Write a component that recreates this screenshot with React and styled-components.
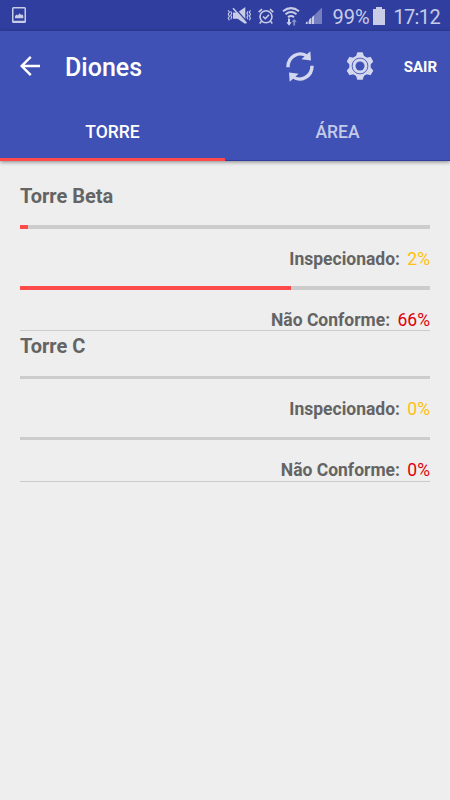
import React from 'react';
import styled, { createGlobalStyle } from 'styled-components';

const COLORS = {
  statusBar: '#303f9f',
  primary: '#3f51b5',
  accent: '#ff4a4a',
  page: '#eeeeee',
  track: '#cccccc',
  text: '#646464',
  statusIcon: '#c8cce7',
  toolbarIcon: '#d4d8ee',
};

const towers = [
  { name: 'Torre Beta', inspected: 2, nonConforming: 66 },
  { name: 'Torre C', inspected: 0, nonConforming: 0 },
];

const PictureIcon = () => (
  <svg width="16" height="17" viewBox="0 0 16 17">
    <path fill={COLORS.statusIcon} fillRule="evenodd" d="M2.5 0h11a1.500 1.500 0 0 1 1.500 1.500v13a1.500 1.500 0 0 1-1.500 1.500h-11a1.500 1.500 0 0 1-1.500-1.500v-13A1.500 1.500 0 0 1 2.500 0zM2.500 1.500v12.200h11V1.500z" />
    <path fill={COLORS.statusIcon} d="M4 11.300V9l1.700-1.500 1.200 1 1.500-2.300 1.700 1.700 1-.7 1.200 1.600v2.500z" />
  </svg>
);

const MuteIcon = () => (
  <svg width="26" height="18" viewBox="0 0 26 18">
    <path fill={COLORS.statusIcon} d="M6 5.500h4.600L18.300 0v17l-7.700-5.200H6z" />
    <path stroke={COLORS.statusBar} strokeWidth="1.300" d="M7.200.5l13 14.500" />
    <path stroke={COLORS.statusIcon} strokeWidth="1.500" d="M6 1.300l13.500 15" />
    <path fill="none" stroke={COLORS.statusIcon} strokeWidth="1.100" d="M1.200 3.200l1.200 2-1.200 2 1.200 2-1.200 2 1.200 2M3.700 4.200l1 2-1 2 1 2-1 2M21 4.200l-1 2 1 2-1 2 1 2M23.500 3.200l-1.200 2 1.200 2-1.200 2 1.200 2-1.200 2" />
  </svg>
);

const AlarmIcon = () => (
  <svg width="16" height="17" viewBox="0 0 16 17">
    <g fill="none" stroke={COLORS.statusIcon} strokeWidth="1.600">
      <circle cx="8" cy="8.700" r="6" />
      <path d="M5 8.500l2.300 2.200 3.700-4M.7 4.200L4 1.200M15.300 4.200L12 1.200M3.500 13.300l-1.800 2.200M12.500 13.300l1.800 2.200" />
    </g>
  </svg>
);

const WifiIcon = () => (
  <svg width="18" height="19" viewBox="0 0 18 19">
    <g fill="none" stroke={COLORS.statusIcon} strokeWidth="2">
      <path d="M1 4.200q8-6.200 16 0M3.500 7.200q5.500-4.400 11 0M6 10.100q3-2.300 6 0" />
    </g>
    <path fill={COLORS.statusIcon} d="M6 11.500h2v3.700h1.700L7 18.800l-2.700-3.600H6z" />
    <path fill="#8790c9" d="M11.300 18.500v-3.400H9.700l2.500-3.300 2.500 3.300h-1.600v3.400z" />
  </svg>
);

const SignalIcon = () => (
  <svg width="18" height="18" viewBox="0 0 18 18">
    <path fill="#7680c1" d="M17 .5V17H.5z" />
    <path fill={COLORS.statusIcon} d="M.8 17v-1.500l1.500-1.300V17zM4 17v-4.200l2-2V17zM7 17V10.200l2-2V17z" />
  </svg>
);

const BatteryIcon = () => (
  <svg width="12" height="18" viewBox="0 0 12 18">
    <path fill={COLORS.statusIcon} d="M3 0h6v2h3v16H0V2h3z" />
  </svg>
);

const BackIcon = () => (
  <svg width="20" height="20" viewBox="0 0 20 20">
    <path fill="none" stroke="#fff" strokeWidth="2.400" d="M20 10H2M10.800.9L1.700 10l9.100 9.100" />
  </svg>
);

const SyncIcon = () => (
  <svg width="28" height="31" viewBox="0 0 28 31">
    <g fill="none" stroke={COLORS.toolbarIcon} strokeWidth="3.400">
      <path d="M2 16.200A12.300 12.900 0 0 1 21.500 5.500" />
      <path d="M26 14.800A12.300 12.900 0 0 1 6.500 25.500" />
    </g>
    <path fill={COLORS.toolbarIcon} d="M24.300.3L25 9.400 15.400 8.300zM3.700 30.700L3 21.600l9.600 1.100z" />
  </svg>
);

const GearIcon = () => (
  <svg width="28" height="28" viewBox="-14 -14 28 28">
    <g fill={COLORS.toolbarIcon}>
      <circle r="10.700" />
      {[0, 60, 120, 180, 240, 300].map(angle => (
        <path key={angle} transform={`rotate(${angle})`} d="M-4.300-8.500L-2.900-13.200Q-2.700-13.800-1.900-13.800h3.800Q2.700-13.800 2.900-13.200L4.300-8.500z" />
      ))}
    </g>
    <circle r="7.900" fill="none" stroke={COLORS.primary} strokeWidth=".9" />
    <circle r="4.500" fill={COLORS.primary} />
  </svg>
);

const Progress = ({ label, value, color }) => (
  <>
    <Track>
      <Fill style={{ width: `${value}%` }} />
    </Track>
    <Label>
      {label}: <Value $color={color}>{value}%</Value>
    </Label>
  </>
);

const App = () => (
  <Screen>
    <GlobalStyle />
    <StatusBar>
      <PictureIcon />
      <StatusIcons>
        <SmallIcons>
          <MuteIcon />
          <AlarmIcon />
          <WifiIcon />
          <SignalIcon />
        </SmallIcons>
        <Percent>99%</Percent>
        <BatteryIcon />
        <Clock>17:12</Clock>
      </StatusIcons>
    </StatusBar>
    <Header>
      <Toolbar>
        <BackIcon />
        <Title>Diones</Title>
        <Actions>
          <SyncIcon />
          <GearIcon />
          <Exit>SAIR</Exit>
        </Actions>
      </Toolbar>
      <Tabs>
        <Tab $active>TORRE</Tab>
        <Tab>ÁREA</Tab>
      </Tabs>
    </Header>
    <List>
      {towers.map(tower => (
        <Tower key={tower.name}>
          <TowerName>{tower.name}</TowerName>
          <Progress label="Inspecionado" value={tower.inspected} color="#ffbf10" />
          <Progress label="Não Conforme" value={tower.nonConforming} color="#e00008" />
        </Tower>
      ))}
    </List>
  </Screen>
);

const GlobalStyle = createGlobalStyle`
  * {
    box-sizing: border-box;
  }
  body {
    margin: 0;
    background: ${COLORS.page};
    font-family: Roboto, "Liberation Sans", sans-serif;
  }
  svg {
    display: block;
    flex: none;
  }
`;
const Screen = styled.div`
  width: 450px;
  height: 800px;
  overflow: hidden;
  background: ${COLORS.page};
`;
const StatusBar = styled.div`
  display: flex;
  align-items: center;
  justify-content: space-between;
  height: 31px;
  padding: 0 10px 0 11px;
  background: ${COLORS.statusBar};
  color: ${COLORS.statusIcon};
`;
const StatusIcons = styled.div`
  display: flex;
  align-items: center;
`;
const SmallIcons = styled.div`
  display: flex;
  align-items: center;
  gap: 5px;
  margin-top: 1px;
  svg:nth-child(3) {
    margin-left: 3px;
  }
`;
const Percent = styled.span`
  margin: 2px 3px 0 10px;
  font-size: 20px;
  line-height: 24px;
`;
const Clock = styled.span`
  margin: 2px 0 0 8.7px;
  font-size: 20px;
  letter-spacing: -0.65px;
  line-height: 24px;
`;
const Header = styled.div`
  position: relative;
  height: 130px;
  background: ${COLORS.primary};
  box-shadow: 0 1px 4px rgba(0, 0, 0, 0.45);
`;
const Toolbar = styled.div`
  display: flex;
  align-items: center;
  height: 70px;
  padding: 0 13px 0 20px;
`;
const Title = styled.h1`
  margin: 4px 0 0 25px;
  color: white;
  font-size: 25px;
  font-weight: 500;
  line-height: 30px;
`;
const Actions = styled.div`
  display: flex;
  align-items: center;
  margin-left: auto;
  gap: 32px;
`;
const Exit = styled.span`
  color: white;
  font-size: 15px;
  font-weight: 700;
  margin: 2px 0 0 -2px;
`;
const Tabs = styled.div`
  display: flex;
  height: 60px;
`;
const Tab = styled.div`
  flex: 1;
  padding-top: 20px;
  border-bottom: ${props => (props.$active ? `3px solid ${COLORS.accent}` : '1px solid #303f9f')};
  color: ${props => (props.$active ? '#ffffff' : '#c5cae9')};
  font-size: 17.5px;
  font-weight: 500;
  line-height: 22px;
  text-align: center;
`;
const List = styled.div`
  padding: 20px 20px 0;
`;
const Tower = styled.section`
  height: 150.4px;
  border-bottom: 1px solid #cccccc;
`;
const TowerName = styled.h2`
  margin: 0;
  height: 44.4px;
  padding-top: 2.5px;
  color: ${COLORS.text};
  font-size: 20px;
  font-weight: 700;
  line-height: 24px;
`;
const Track = styled.div`
  height: 3.5px;
  background: ${COLORS.track};
`;
const Fill = styled.div`
  height: 100%;
  background: ${COLORS.accent};
`;
const Label = styled.div`
  height: 57.6px;
  padding-top: 18.8px;
  color: ${COLORS.text};
  font-size: 17.5px;
  font-weight: 700;
  line-height: 22px;
  text-align: right;
  &:last-child {
    height: auto;
  }
`;
const Value = styled.span`
  margin-left: 3px;
  color: ${props => props.$color};
  font-weight: 400;
`;

export default App;
